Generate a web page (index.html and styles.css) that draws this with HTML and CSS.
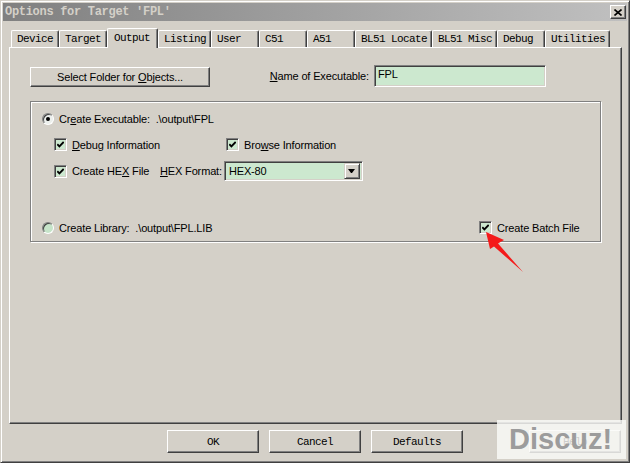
FILE: index.html
```html
<!DOCTYPE html>
<html>
<head>
    <link rel="stylesheet" href="styles.css">
</head>
<body>
    <div class="window">
        <div class="titlebar">
            <span class="title">Options for Target 'FPL'</span>
            <span class="close-btn">
                <svg width="8" height="7" viewBox="0 0 8 7"><path d="M0.5 0.5 L7.5 6.5 M7.5 0.5 L0.5 6.5" stroke="#000" stroke-width="1.6"/></svg>
            </span>
        </div>

        <div class="tabs">
            <div class="tab">Device</div>
            <div class="tab">Target</div>
            <div class="tab active">Output</div>
            <div class="tab">Listing</div>
            <div class="tab">User</div>
            <div class="tab">C51</div>
            <div class="tab">A51</div>
            <div class="tab">BL51 Locate</div>
            <div class="tab">BL51 Misc</div>
            <div class="tab">Debug</div>
            <div class="tab">Utilities</div>
        </div>

        <div class="panel">
            <div class="top-row">
                <div class="btn folder-btn"><span>Select Folder for <u>O</u>bjects...</span></div>
                <div class="exe-name">
                    <span><u>N</u>ame of Executable:</span>
                    <div class="field exe-field">FPL</div>
                </div>
            </div>

            <div class="group">
                <div class="row row-exe">
                    <span class="radio on"></span>
                    <span>Cr<u>e</u>ate Executable:&nbsp; .\output\FPL</span>
                </div>
                <div class="row row-info">
                    <div class="opt opt-debug">
                        <span class="chk"><svg class="tick" viewBox="0 0 7 7"><path d="M0.3 3.2 L2.4 5.3 L6.7 1"/></svg></span>
                        <span><u>D</u>ebug Information</span>
                    </div>
                    <div class="opt">
                        <span class="chk"><svg class="tick" viewBox="0 0 7 7"><path d="M0.3 3.2 L2.4 5.3 L6.7 1"/></svg></span>
                        <span>Bro<u>w</u>se Information</span>
                    </div>
                </div>
                <div class="row row-hex">
                    <div class="opt opt-hex">
                        <span class="chk"><svg class="tick" viewBox="0 0 7 7"><path d="M0.3 3.2 L2.4 5.3 L6.7 1"/></svg></span>
                        <span>Create HE<u>X</u> File</span>
                    </div>
                    <span class="hex-label"><u>H</u>EX Format:</span>
                    <div class="field combo">
                        <span class="combo-value">HEX-80</span>
                        <span class="combo-btn"><span class="down"></span></span>
                    </div>
                </div>
                <div class="row row-lib">
                    <div class="opt opt-lib">
                        <span class="radio"></span>
                        <span>Create Library:&nbsp; .\output\FPL.LIB</span>
                    </div>
                    <div class="opt">
                        <span class="chk"><svg class="tick" viewBox="0 0 7 7"><path d="M0.3 3.2 L2.4 5.3 L6.7 1"/></svg></span>
                        <span>Create Batch File</span>
                    </div>
                </div>
            </div>
        </div>

        <div class="buttons">
            <div class="btn dlg-btn">OK</div>
            <div class="btn dlg-btn">Cancel</div>
            <div class="btn dlg-btn">Defaults</div>
            <div class="btn dlg-btn help-btn">Help</div>
        </div>

        <!-- forum watermark + annotation arrow -->
        <div class="watermark">Discuz!</div>
        <svg class="pointer" width="630" height="463" viewBox="0 0 630 463">
            <polygon points="485,231 503,239 497,242.5 522,271 493,245.5 489,248" fill="#f41a1a"/>
        </svg>
    </div>
</body>
</html>
```

FILE: styles.css
```css
body {
    margin: 0;
    background: #d4d0c8;
    font-family: 'Liberation Sans', Arial, sans-serif;
    font-size: 11px;
    letter-spacing: -0.15px;
    color: #000;
}

.window {
    position: relative;
    width: 630px;
    height: 463px;
    box-sizing: border-box;
    padding: 2px;
    background: #d4d0c8;
    border: 1px solid;
    border-color: #d4d0c8 #404040 #404040 #d4d0c8;
    box-shadow: inset 1px 1px #fff, inset -1px -1px #808080;
    overflow: hidden;
}

.titlebar {
    height: 18px;
    display: flex;
    align-items: center;
    justify-content: space-between;
    padding: 0 1px 0 2px;
    background: linear-gradient(90deg, #808080, #c0c0c0);
}

.title {
    font-family: 'Liberation Mono', monospace;
    font-weight: bold;
    font-size: 12px;
    letter-spacing: -0.3px;
    color: #d4d0c8;
}

.close-btn {
    width: 16px;
    height: 14px;
    box-sizing: border-box;
    display: flex;
    align-items: center;
    justify-content: center;
    background: #d4d0c8;
    border: 1px solid;
    border-color: #fff #404040 #404040 #fff;
    box-shadow: inset -1px -1px #808080;
}

.tabs {
    display: flex;
    align-items: flex-end;
    height: 19px;
    margin: 7px 0 0 8px;
}

.tab {
    height: 17px;
    min-width: 48px;
    box-sizing: border-box;
    padding: 0 4px 0 5px;
    display: flex;
    align-items: center;
    font-family: 'Liberation Mono', monospace;
    font-size: 11px;
    letter-spacing: -0.6px;
    white-space: pre;
    border: 1px solid;
    border-bottom: none;
    border-color: #fff #404040 #fff #fff;
    border-radius: 2px 2px 0 0;
    box-shadow: inset -1px 0 #808080;
}

.tab.active {
    position: relative;
    z-index: 1;
    height: 20px;
    min-width: 51px;
    padding: 0 6px 2px 6px;
    margin-bottom: -1px;
    background: #d4d0c8;
}

.panel {
    width: 613px;
    height: 377px;
    box-sizing: border-box;
    margin-left: 6px;
    padding: 17px 0 0 20px;
    border: 1px solid;
    border-color: #fff #404040 #404040 #fff;
    box-shadow: inset -1px -1px #808080;
}

.btn {
    box-sizing: border-box;
    display: flex;
    align-items: center;
    justify-content: center;
    background: #d4d0c8;
    border: 1px solid;
    border-color: #fff #404040 #404040 #fff;
    box-shadow: inset -1px -1px #808080;
}

.top-row {
    width: 516px;
    height: 22px;
    display: flex;
    align-items: center;
    justify-content: space-between;
}

.folder-btn {
    width: 180px;
    height: 20px;
    margin-top: 2px;
}

.exe-name {
    display: flex;
    align-items: center;
    gap: 5px;
}

.field {
    box-sizing: border-box;
    background: #cce8cf;
    border: 1px solid;
    border-color: #808080 #fff #fff #808080;
    box-shadow: inset 1px 1px #404040, inset -1px -1px #d4d0c8;
}

.exe-field {
    width: 172px;
    height: 22px;
    padding: 2px 0 0 3px;
}

.group {
    width: 571px;
    height: 141px;
    box-sizing: border-box;
    margin-top: 14px;
    padding: 10px 0 0 11px;
    border: 1px solid #808080;
    box-shadow: inset 1px 1px #fff, 1px 1px #fff;
}

.row {
    display: flex;
    align-items: center;
}

.row-exe {
    height: 13px;
    gap: 5px;
}

.row-info {
    height: 13px;
    margin: 13px 0 0 12px;
}

.row-hex {
    height: 20px;
    margin: 10px 0 0 12px;
}

.row-lib {
    height: 13px;
    margin-top: 40px;
}

.opt {
    display: flex;
    align-items: center;
    gap: 5px;
}

.opt-debug {
    width: 172px;
}

.opt-hex {
    width: 106px;
}

.opt-lib {
    width: 437px;
}

.hex-label {
    margin-right: 2px;
}

.chk {
    position: relative;
    flex: none;
    width: 13px;
    height: 13px;
    box-sizing: border-box;
    background: #cce8cf;
    border: 1px solid;
    border-color: #808080 #fff #fff #808080;
    box-shadow: inset 1px 1px #404040, inset -1px -1px #d4d0c8;
}

.tick {
    position: absolute;
    left: 2px;
    top: 2px;
    width: 7px;
    height: 7px;
    fill: none;
    stroke: #000;
    stroke-width: 1.9;
}

.radio {
    position: relative;
    flex: none;
    width: 12px;
    height: 12px;
    box-sizing: border-box;
    border-radius: 50%;
    background: #c6e4c9;
    border: 1px solid;
    border-color: #808080 #fff #fff #808080;
    box-shadow: inset 1px 1px #404040;
}

.radio.on {
    background: #ecefec;
}

.radio.on::after {
    content: '';
    position: absolute;
    left: 3px;
    top: 3px;
    width: 4px;
    height: 4px;
    border-radius: 50%;
    background: #000;
}

.combo {
    width: 139px;
    height: 20px;
    padding: 2px;
    display: flex;
    align-items: center;
    justify-content: space-between;
}

.combo-value {
    padding-left: 2px;
}

.combo-btn {
    width: 16px;
    height: 16px;
    box-sizing: border-box;
    display: flex;
    align-items: center;
    justify-content: center;
    background: #d4d0c8;
    border: 1px solid;
    border-color: #d4d0c8 #404040 #404040 #d4d0c8;
    box-shadow: inset 1px 1px #fff, inset -1px -1px #808080;
}

.down {
    width: 1px;
    height: 0;
    border-left: 3px solid transparent;
    border-right: 3px solid transparent;
    border-top: 4px solid #000;
}

.buttons {
    display: flex;
    gap: 10px;
    margin: 6px 0 0 164px;
}

.dlg-btn {
    width: 92px;
    height: 23px;
    font-family: 'Liberation Mono', monospace;
    font-size: 11px;
    letter-spacing: -0.6px;
}

.help-btn {
    margin-left: 56px;
}

.watermark {
    position: absolute;
    left: 496px;
    top: 419px;
    width: 129px;
    height: 39px;
    box-sizing: border-box;
    padding-left: 12px;
    background: rgba(250, 250, 248, 0.82);
    color: #9c9c9c;
    font-family: 'Liberation Sans', Arial, sans-serif;
    font-weight: bold;
    font-size: 29px;
    letter-spacing: 0;
    line-height: 39px;
}

.pointer {
    position: absolute;
    left: 0;
    top: 0;
    pointer-events: none;
}
```
